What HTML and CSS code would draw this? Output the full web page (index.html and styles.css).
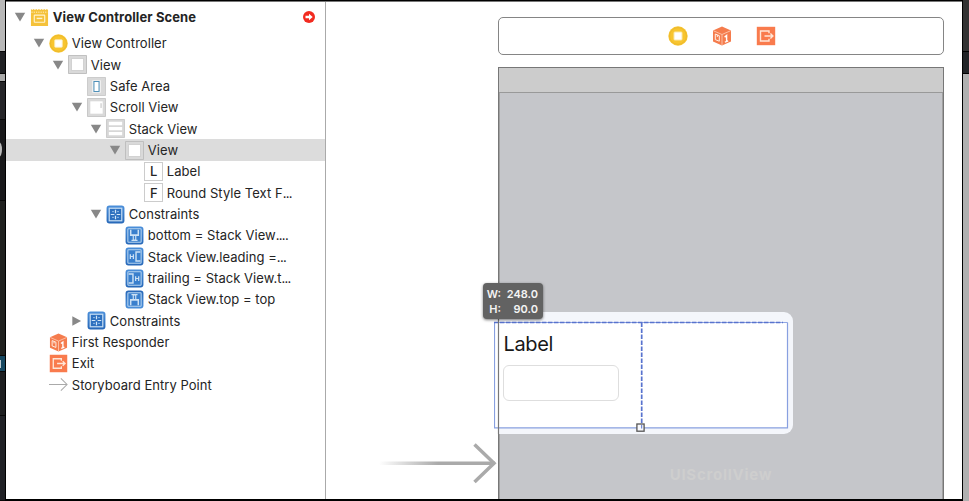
FILE: index.html
```html
<!DOCTYPE html>
<html lang="en">
<head>
<meta charset="utf-8">
<title>Interface Builder</title>
<link rel="stylesheet" href="styles.css">
</head>
<body>
<svg class="defs" width="0" height="0" aria-hidden="true">
  <defs>
    <linearGradient id="blue" x1="0" y1="0" x2="0" y2="1"><stop offset="0" stop-color="#4b8fda"/><stop offset="1" stop-color="#2768b8"/></linearGradient>
    <linearGradient id="fade" gradientUnits="userSpaceOnUse" x1="0" y1="0" x2="118" y2="0"><stop offset="0" stop-color="#aaa" stop-opacity="0"/><stop offset=".5" stop-color="#aaa"/><stop offset="1" stop-color="#aaa"/></linearGradient>
  </defs>
  <symbol id="tri" viewBox="0 0 12 12"><path d="M.8 1.8h10.4L6 10.4z" fill="#888"/></symbol>
  <symbol id="tri-right" viewBox="0 0 12 12"><path d="M1.3 1.2v9.6L10.1 6z" fill="#888"/></symbol>
  <symbol id="scene" viewBox="0 0 20 20"><path d="M1 1l1.4 1.2L3.8 1l1.4 1.2L6.6 1 8 2.2 9.4 1l1.4 1.2L12.2 1l1.4 1.2L15 1l1.4 1.2L17.8 1l1.2 1.2V19H1z" fill="#f5c23a"/><path d="M1.5 4.4h17" stroke="#fff3cf" stroke-dasharray="1.3 1.1"/><rect x="4.5" y="7.5" width="11" height="7.5" rx=".5" fill="none" stroke="#fff3cf" stroke-width="1.2"/><path d="M7 10.2h6v1.5H7z" fill="#fff3cf"/></symbol>
  <symbol id="vc" viewBox="0 0 20 20"><circle cx="10" cy="10" r="9.7" fill="#f8c52f"/><circle cx="10" cy="10" r="8.4" fill="none" stroke="#e6b32c" stroke-width=".7"/><rect x="6" y="6" width="8" height="8" rx=".8" fill="#fff" stroke="#fae7aa"/></symbol>
  <symbol id="view" viewBox="0 0 20 20"><path d="M.5.5h19v19H.5z" fill="#d9d9d9" stroke="#bdbdbd"/><path d="M3.7 3.7h12.6v12.6H3.7z" fill="#fff" stroke="#c6c6c6" stroke-width=".7"/></symbol>
  <symbol id="safe" viewBox="0 0 20 20"><path d="M.5.5h19v19H.5z" fill="#d9d9d9" stroke="#c9c9c9"/><path d="M5.5 3.5h9v13h-9z" fill="#f5f5f5"/><path d="M7.3 4.7h5.4v10.6H7.3z" fill="#fff" stroke="#4f90b8" stroke-width="1.1"/></symbol>
  <symbol id="scroll" viewBox="0 0 20 20"><path d="M.5.5h19v19H.5z" fill="#d9d9d9" stroke="#c5c5c5"/><path d="M3.5 3.5h13v13h-13z" fill="#fff"/><path d="M14.8 5.5v5" stroke="#bbb"/></symbol>
  <symbol id="stack" viewBox="0 0 20 20"><path d="M.5.5h19v19H.5z" fill="#d7d7d7" stroke="#c9c9c9"/><path d="M3 3h14v3.5H3zM3 8.4h14v3.4H3zM3 13.7h14v3.3H3z" fill="#fff"/></symbol>
  <symbol id="cons" viewBox="0 0 20 20"><rect x=".6" y=".6" width="18.8" height="18.8" rx="3" fill="url(#blue)"/><rect x="3.4" y="3.4" width="13.2" height="13.2" fill="#2d70bf" stroke="#c4dcf3" stroke-width="1.3"/><path d="M10 5v3.8M10 11.2V15M5 10h3.8M11.2 10H15" stroke="#d4e7f8" stroke-width="1.3"/><path d="M6.3 7h2.2M11.5 7h2.2M6.3 13h2.2M11.5 13h2.2" stroke="#9fc5eb" stroke-width=".9"/></symbol>
  <symbol id="attach" viewBox="0 0 20 20"><rect x=".6" y=".6" width="18.8" height="18.8" rx="3" fill="url(#blue)"/><rect x="3" y="3" width="14" height="14" rx=".7" fill="#397fcd" stroke="#b7d4f0" stroke-width="1.1"/><path d="M6 4v5.6h8V4" fill="none" stroke="#cce1f5" stroke-width="1.6"/><path d="M8.7 9.8v5h2.6v-5M6.8 15.2h6.4" fill="none" stroke="#cce1f5" stroke-width="1.2"/></symbol>
  <symbol id="side" viewBox="0 0 20 20"><rect x=".6" y=".6" width="18.8" height="18.8" rx="3" fill="url(#blue)"/><rect x="3" y="3" width="14" height="14" rx=".7" fill="#397fcd" stroke="#b7d4f0" stroke-width="1.1"/><path d="M16.2 5.3h-4.6v9.4h4.6" fill="none" stroke="#cce1f5" stroke-width="1.5"/><path d="M5.6 7.5v5M8.8 7.5v5M5.6 10h3" fill="none" stroke="#cce1f5" stroke-width="1.3"/></symbol>
  <symbol id="cube" viewBox="0 0 20 20"><path d="M10 .5l9 4v11l-9 4-9-4v-11z" fill="#f57c4d"/><path d="M1.3 4.7L10 8.5l8.7-3.8M10 8.5v10.7" fill="none" stroke="#ffd0bb" stroke-width=".8"/><path d="M3.3 8l4 1.7v5.5l-4-1.6zM5.3 9v2" fill="none" stroke="#fff0e7"/><path d="M12.6 11.1l2-1.6v6M12.9 16.2l3.3-1.3" fill="none" stroke="#fff" stroke-width="1.4"/></symbol>
  <symbol id="exit" viewBox="0 0 20 20"><path d="M.8.8h18.4v18.4H.8z" fill="#f97b4d"/><path d="M13 7.2V5H4.5v10H13v-2.2M8.5 10h8M14.4 7.6l2.5 2.4-2.5 2.4" fill="none" stroke="#ffe6d7" stroke-width="1.4"/></symbol>
  <symbol id="entry" viewBox="0 0 20 20"><path d="M0 10h19M12.5 3.5L19 10l-6.5 6.5" fill="none" stroke="#aaa" stroke-width="1.1"/></symbol>
</svg>

<div class="screen">
  <div class="backdrop-left"><i class="l1"></i><i class="l2"></i><i class="l3"></i><i class="l4"></i><i class="l5"></i><i class="l6"></i><i class="l7"></i><i class="l8"></i><i class="l9"></i><b class="paren"></b></div>
  <div class="window">
    <nav class="outline">
      <div class="row scene d0"><svg class="tri"><use href="#tri"/></svg><svg class="icon"><use href="#scene"/></svg><span>View Controller Scene</span>
        <svg class="error" viewBox="0 0 12 12"><circle cx="6" cy="6" r="6" fill="#f22b20"/><path d="M2.5 4.8H6V2.7L9.7 6 6 9.3V7.2H2.5z" fill="#fff"/></svg></div>
      <div class="row d1"><svg class="tri"><use href="#tri"/></svg><svg class="icon"><use href="#vc"/></svg><span>View Controller</span></div>
      <div class="row d2"><svg class="tri"><use href="#tri"/></svg><svg class="icon"><use href="#view"/></svg><span>View</span></div>
      <div class="row d3"><i class="tri"></i><svg class="icon"><use href="#safe"/></svg><span>Safe Area</span></div>
      <div class="row d3"><svg class="tri"><use href="#tri"/></svg><svg class="icon"><use href="#scroll"/></svg><span>Scroll View</span></div>
      <div class="row d4"><svg class="tri"><use href="#tri"/></svg><svg class="icon"><use href="#stack"/></svg><span>Stack View</span></div>
      <div class="row d5 selected"><svg class="tri"><use href="#tri"/></svg><svg class="icon"><use href="#view"/></svg><span>View</span></div>
      <div class="row d6"><i class="tri"></i><b class="icon letter">L</b><span>Label</span></div>
      <div class="row d6"><i class="tri"></i><b class="icon letter">F</b><span>Round Style Text F<span class="dots">...</span></span></div>
      <div class="row d4"><svg class="tri"><use href="#tri"/></svg><svg class="icon"><use href="#cons"/></svg><span>Constraints</span></div>
      <div class="row d5"><i class="tri"></i><svg class="icon"><use href="#attach"/></svg><span>bottom = Stack View<span class="dots">....</span></span></div>
      <div class="row d5"><i class="tri"></i><svg class="icon"><use href="#side"/></svg><span>Stack View.leading =<span class="dots">...</span></span></div>
      <div class="row d5"><i class="tri"></i><svg class="icon mirror"><use href="#side"/></svg><span>trailing = Stack View.t<span class="dots">...</span></span></div>
      <div class="row d5"><i class="tri"></i><svg class="icon flip"><use href="#attach"/></svg><span>Stack View.top = top</span></div>
      <div class="row d3"><svg class="tri"><use href="#tri-right"/></svg><svg class="icon"><use href="#cons"/></svg><span>Constraints</span></div>
      <div class="row d1"><i class="tri"></i><svg class="icon"><use href="#cube"/></svg><span>First Responder</span></div>
      <div class="row d1"><i class="tri"></i><svg class="icon"><use href="#exit"/></svg><span>Exit</span></div>
      <div class="row d1"><i class="tri"></i><svg class="icon"><use href="#entry"/></svg><span>Storyboard Entry Point</span></div>
    </nav>
    <main class="canvas">
      <div class="dock"><svg class="icon"><use href="#vc"/></svg><svg class="icon"><use href="#cube"/></svg><svg class="icon"><use href="#exit"/></svg></div>
      <div class="device"><div class="status"></div><div class="scroll-area"><span class="watermark">UIScrollView</span></div></div>
      <svg class="entry-arrow" viewBox="0 0 118 42"><path d="M0 19.5h116v3.4H0z" fill="url(#fade)"/><path d="M95.5 2.5L115 21.2 95.5 40" fill="none" stroke="#aaa" stroke-width="3.5"/></svg>
      <div class="halo"></div>
      <div class="selection"><span class="label">Label</span><div class="field"></div></div>
      <svg class="guides" viewBox="0 0 300 116"><path d="M.5 4.5v105.3h293V4.5" fill="none" stroke="#88a0e0" stroke-width="1.2"/><path d="M.5 4.5h293" stroke="#7590dc" stroke-width=".8"/><path d="M0 4.5h289M147.7 4.5v105" fill="none" stroke="#5873ce" stroke-width="1.7" stroke-dasharray="4.4 1.6"/><path d="M4.5 0v116" stroke="#777" stroke-width="1.2"/><rect x="142.9" y="106" width="7.2" height="7.2" fill="#f8f9fd" stroke="#555" stroke-width="1.3"/><path d="M147.7 107v3.5" stroke="#5873ce"/></svg>
      <div class="size-tip"><span>W:</span><span>248.0</span><span>H:</span><span>90.0</span></div>
    </main>
  </div>
  <div class="backdrop-right"><i></i></div>
</div>
</body>
</html>
```
FILE: styles.css
```css
* { box-sizing: border-box; }
body { margin: 0; background: #000; overflow: hidden; font-family: Inter, "Liberation Sans", sans-serif; color: #242424; }
svg { display: block; flex: none; }
.defs { position: absolute; }
.screen { display: flex; width: 969px; height: 501px; background: #000; }

.backdrop-left { position: relative; display: flex; flex-direction: column; width: 6px; height: 501px; border-right: 1px solid #000; overflow: hidden; background: #1c1c1e; }
.backdrop-left i { display: block; flex: none; border-bottom: 1px solid #080808; }
.l1 { height: 52px; background: #b8b8b8; }
.l2 { height: 22px; background: #202124; }
.l3 { height: 8px; background: #aaa; }
.l4 { height: 38px; background: #252528; }
.l5 { height: 81px; background: #19191b; }
.l6 { height: 155px; background: #20211f; }
.l7 { height: 16px; background: linear-gradient(#bcc8cf, #bcc8cf) 0 4px / 1px 8px no-repeat #174861; }
.l8 { height: 44px; background: #1d1e20; }
.l9 { height: 85px; background: #202126; }
.paren { position: absolute; left: -4px; top: 142px; width: 6px; height: 15px; border-right: 2px solid #bbb; border-radius: 50%; }

.window { display: flex; width: 956px; height: 497px; margin-top: 2px; background: #fff; box-shadow: 0 -1px #777; }
.outline { width: 320px; border-right: 1px solid #aaa; flex: none; }
.row { display: flex; align-items: center; height: 21.33px; font-size: 13px; white-space: nowrap; letter-spacing: .04px; }
.row.scene { height: 30.8px; font-weight: 700; letter-spacing: .1px; }
.row .tri { width: 12px; height: 12px; margin-right: 4.3px; flex: none; }
.row .icon { width: 19px; height: 19px; margin-right: 3.5px; flex: none; }
.dots { letter-spacing: -.7px; }
.d0 { padding-left: 8px; }
.d1 { padding-left: 27px; }
.d2 { padding-left: 46px; }
.d3 { padding-left: 65px; }
.d4 { padding-left: 84px; }
.d5 { padding-left: 103px; }
.d6 { padding-left: 122px; }
.selected { background: #dcdcdc; }
.letter { display: flex; align-items: center; justify-content: center; border: 1px solid #ccc; background: #fff; font-size: 13px; font-weight: 500; }
.mirror { transform: scaleX(-1); }
.flip { transform: scaleY(-1); }
.error { width: 12px; height: 12px; margin-left: auto; margin-right: 10px; }

.canvas { position: relative; width: 636px; padding: 15px 18px 0 172px; display: flex; flex-direction: column; }
.dock { display: flex; align-items: center; justify-content: center; gap: 24px; flex: none; height: 38px; border: 1.4px solid #858585; border-radius: 5px; padding-left: 1px; }
.dock .icon { width: 20px; height: 20px; }
.device { display: flex; flex-direction: column; margin-top: 12px; flex: 1; border: 1px solid #777; border-bottom: 0; }
.status { height: 25px; flex: none; border-bottom: 1px solid #999; background: #ccc; }
.scroll-area { flex: 1; display: flex; align-items: flex-end; justify-content: center; background: #c5c6ca; border: solid #a1a1a1; border-width: 0 1px; padding-bottom: 14px; }
.watermark { font-size: 15px; line-height: 20px; font-weight: 700; letter-spacing: .75px; color: #cecece; }
.entry-arrow { position: absolute; left: 53px; top: 440px; width: 118px; height: 42px; }
.halo { position: absolute; left: 173px; top: 310px; width: 294px; height: 122px; border-radius: 0 9px 9px 0; background: #f4f6fb; }
.selection { position: absolute; left: 168px; top: 320px; width: 294px; height: 106px; padding: 10px 9px; background: #fff; }
.label { display: block; font-size: 20px; line-height: 25px; letter-spacing: -.35px; padding-left: .5px; color: #181818; }
.field { width: 116px; height: 36px; margin-top: 8px; border: 1px solid #dedede; border-radius: 6px; }
.guides { position: absolute; left: 168px; top: 316px; width: 300px; height: 116px; }
.size-tip { position: absolute; left: 157px; top: 281px; width: 60px; height: 36px; display: grid; grid-template-columns: 14px 1fr; column-gap: 3px; align-content: center; justify-items: end; padding: 1px 5px 0 4px; border-radius: 4px; background: #626262; box-shadow: 0 1px 3px #0008; color: #f4f4f4; font-size: 11px; font-weight: 600; line-height: 14.5px; }

.backdrop-right { width: 7px; height: 501px; border-left: 1px solid #000; background: #b0b0b0; }
.backdrop-right i { display: block; height: 74px; background: linear-gradient(#333 0 51px, #000 51px 52px, #222427 52px 73px, #000 73px); }
```
